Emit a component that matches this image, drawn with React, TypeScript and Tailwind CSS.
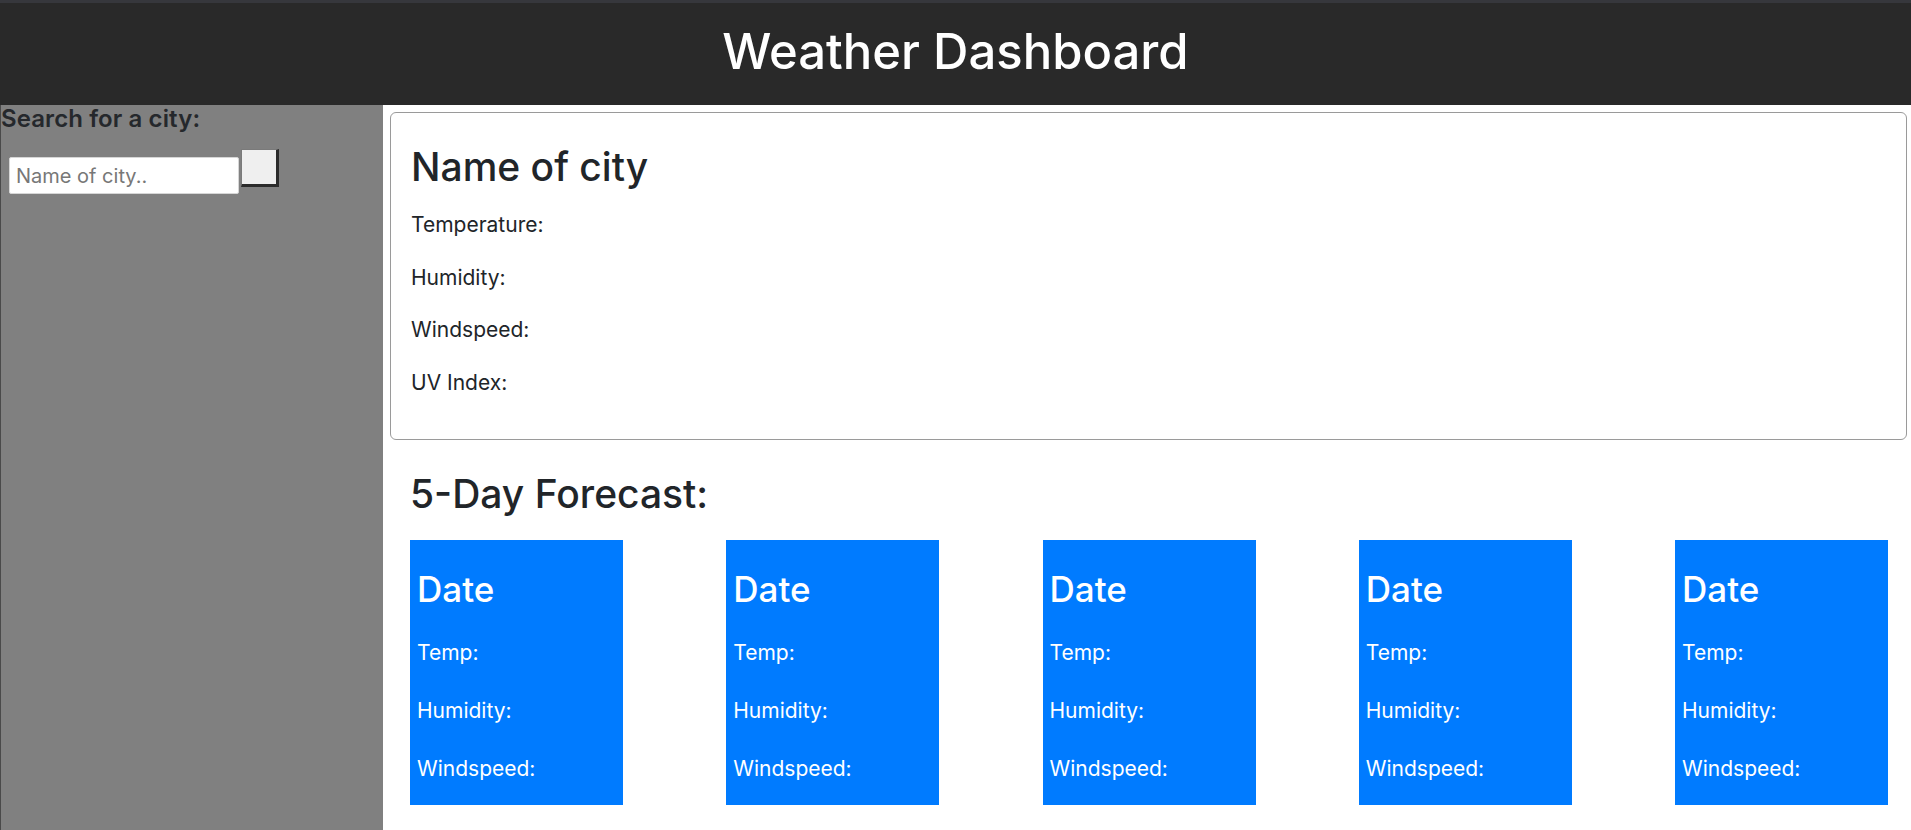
export default function App() {
  const days = [1, 2, 3, 4, 5];
  return (
    <div className="flex min-h-[830px] flex-col bg-white font-['Inter','Liberation_Sans',sans-serif] text-[#212529]">
      <div className="h-[3px] bg-[#36373c]" />
      <header className="flex h-[102px] items-center justify-center bg-[#292929] pb-[5px]">
        <h1 className="text-[49px] leading-none font-medium text-white">Weather Dashboard</h1>
      </header>
      <div className="flex flex-1">
        <aside className="w-[383px] shrink-0 border-l border-[#4a4a4a] bg-[#808080]">
          <h5 className="text-[24px] leading-[28px] font-semibold tracking-[0.1px] text-[#25282c]">Search for a city:</h5>
          <div className="mt-[16px] flex items-start pl-[8px]">
            <input
              type="text"
              placeholder="Name of city.."
              className="mt-[8px] h-[37px] w-[230px] rounded-[2px] border border-[#d6d6d6] bg-white px-[6px] text-[20px] text-[#333] outline-none placeholder:text-[#777]"
            />
            <button className="ml-[2px] h-[38px] w-[38px] border-t border-l border-t-[#7a7a7a] border-l-[#7a7a7a] border-r-[3px] border-b-[3px] border-r-[#2b2b2b] border-b-[#2b2b2b] bg-[#efefef]" />
          </div>
        </aside>
        <main className="flex-1 pt-[7px] pr-[4px] pl-[7px]">
          <section className="rounded-[6px] border border-[#9a9a9a] px-[20px] pt-[30px] pb-[20px]">
            <h2 className="mb-[18px] text-[39px] leading-[48px] font-medium">Name of city</h2>
            <p className="mb-[21px] text-[21px] leading-[31.5px]">Temperature:</p>
            <p className="mb-[21px] text-[21px] leading-[31.5px]">Humidity:</p>
            <p className="mb-[21px] text-[21px] leading-[31.5px]">Windspeed:</p>
            <p className="mb-[21px] text-[21px] leading-[31.5px]">UV Index:</p>
          </section>
          <section className="pt-[30px] pr-[19px] pl-[20px]">
            <h2 className="text-[39px] leading-[48px] font-medium">5-Day Forecast:</h2>
            <div className="mt-[22px] flex justify-between">
              {days.map((d) => (
                <div key={d} className="h-[265px] w-[213px] bg-[#007bff] px-[7px] pt-[28px] text-white">
                  <h3 className="mb-[27px] text-[35px] leading-[42px] font-medium">Date</h3>
                  <p className="mb-[26.5px] text-[21px] leading-[31.5px]">Temp:</p>
                  <p className="mb-[26.5px] text-[21px] leading-[31.5px]">Humidity:</p>
                  <p className="text-[21px] leading-[31.5px]">Windspeed:</p>
                </div>
              ))}
            </div>
          </section>
        </main>
      </div>
    </div>
  );
}
